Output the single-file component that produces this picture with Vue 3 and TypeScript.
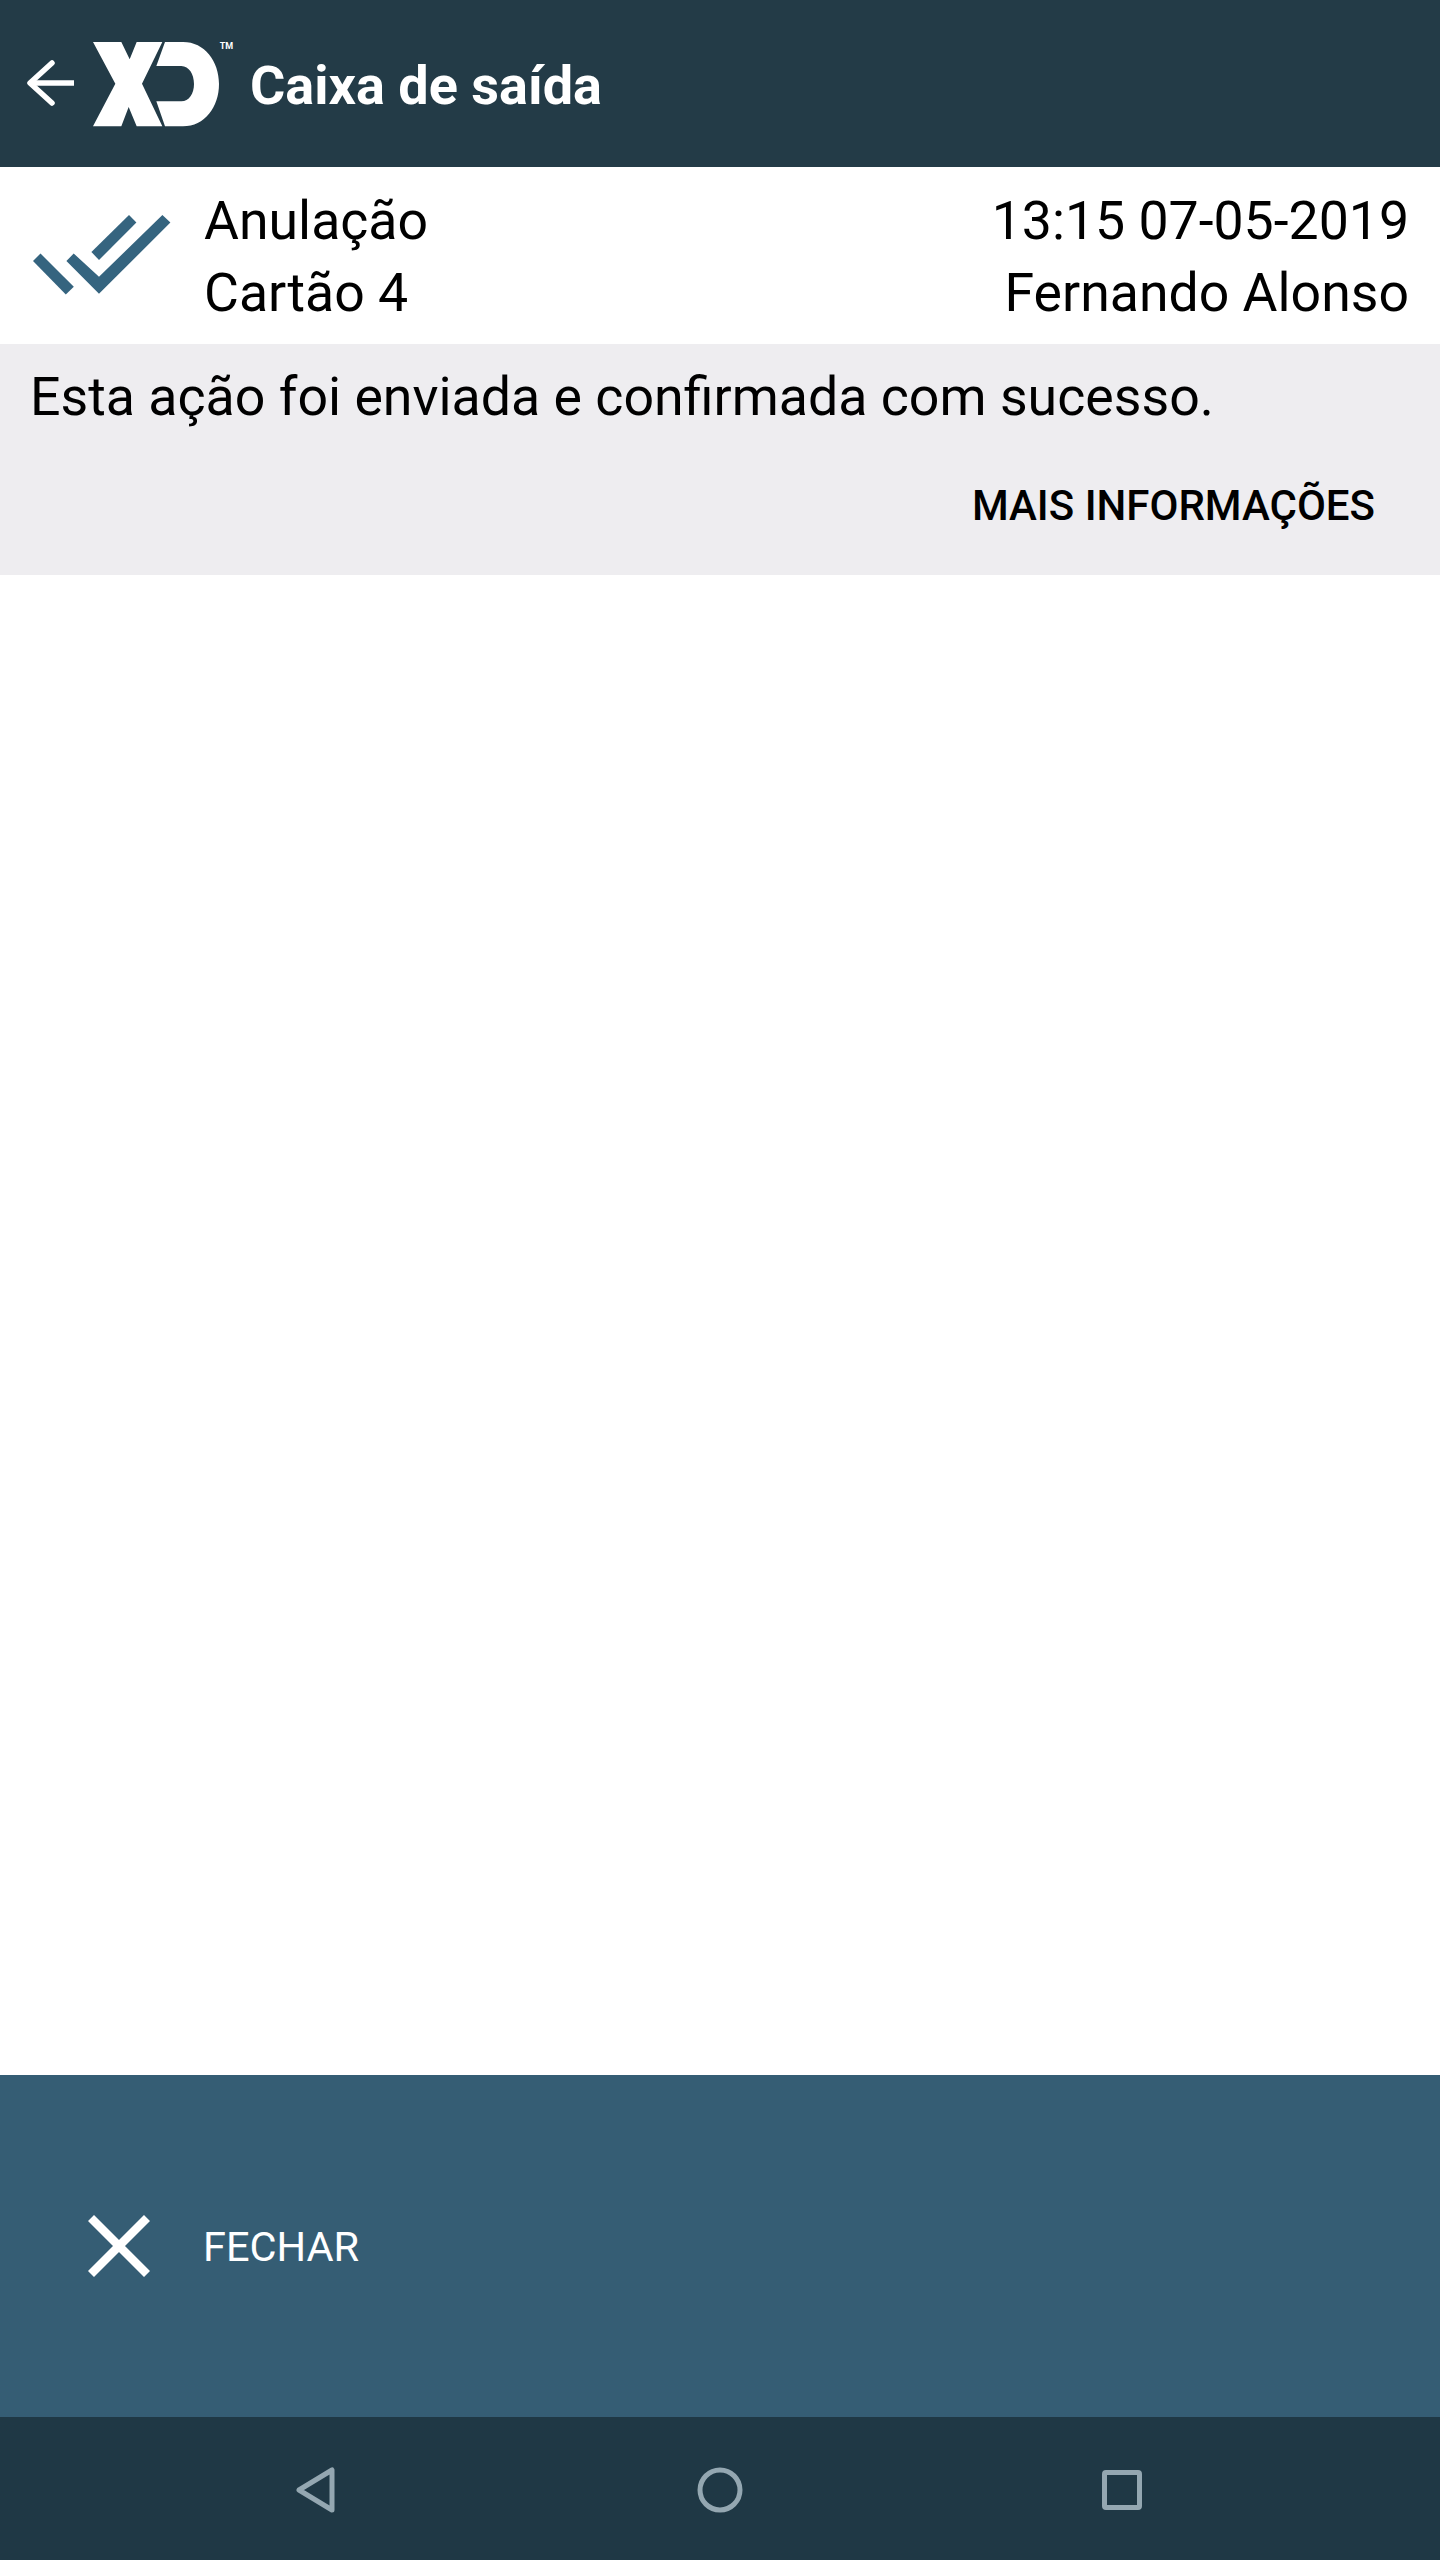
<script setup lang="ts">
const info = {
  action: 'Anulação',
  card: 'Cartão 4',
  time: '13:15 07-05-2019',
  user: 'Fernando Alonso',
  message: 'Esta ação foi enviada e confirmada com sucesso.',
}
</script>

<template>
  <div class="screen">
    <header class="topbar">
      <svg class="back" width="48" height="46" viewBox="0 0 48 46" fill="none" stroke="#fff" stroke-width="5.5" stroke-linecap="round" stroke-linejoin="round">
        <path d="M25 3 3 23 25 43" />
        <path d="M3 23H47" stroke-linecap="butt" />
      </svg>
      <svg class="logo" width="142" height="85" viewBox="0 0 426 255">
        <path fill="#fff" d="M0 0H85L110 52 131 0H208L147 125 208 253H131L107 195 85 253H0L67 125Z" />
        <path fill="#fff" d="M216 0H270C335 0 378 58 378 126 378 195 335 253 270 253H216L190 178H265C288 178 303 155 303 126 303 97 288 72 265 72H190Z" />
        <text x="380" y="20" class="tm">TM</text>
      </svg>
      <h1 class="title">Caixa de saída</h1>
    </header>

    <section class="row">
      <svg class="check" width="140" height="82" viewBox="0 0 140 82" fill="#35647f">
        <path d="M0 46 7.500 38.500 40.800 71.800 32.800 79.500Z" />
        <path d="M33.400 46 40.700 38.500 66 61.800 129.400 0 137.400 7.600 66 78.800Z" />
        <path d="M58.400 37 96 0 103.400 7.600 66 45Z" />
      </svg>
      <div class="col">
        <div>{{ info.action }}</div>
        <div>{{ info.card }}</div>
      </div>
      <div class="col right">
        <div>{{ info.time }}</div>
        <div>{{ info.user }}</div>
      </div>
    </section>

    <section class="detail">
      <p class="message">{{ info.message }}</p>
      <div class="more">MAIS INFORMAÇÕES</div>
    </section>

    <div class="spacer"></div>

    <footer class="actions">
      <svg class="close" width="62" height="62" viewBox="0 0 62 62" stroke="#fff" stroke-width="8.500">
        <path d="M3 3 59 59M59 3 3 59" />
      </svg>
      <span class="close-label">FECHAR</span>
    </footer>

    <nav class="navbar">
      <svg class="nav-back" width="40" height="46" viewBox="0 0 40 46" fill="none" stroke="#94a7b1" stroke-width="5" stroke-linejoin="round">
        <path d="M36 3V43L3 23Z" />
      </svg>
      <svg class="nav-home" width="46" height="46" viewBox="0 0 46 46" fill="none" stroke="#94a7b1" stroke-width="5">
        <circle cx="23" cy="23" r="20" />
      </svg>
      <svg class="nav-recent" width="40" height="40" viewBox="0 0 40 40" fill="none" stroke="#94a7b1" stroke-width="5" stroke-linejoin="round">
        <rect x="2.500" y="2.500" width="35" height="35" rx="1.500" />
      </svg>
    </nav>
  </div>
</template>

<style>
html,
body {
  margin: 0;
  background: #fff;
}
</style>

<style scoped>
.screen {
  width: 1440px;
  height: 2560px;
  display: flex;
  flex-direction: column;
  background: #fff;
  color: #000;
  font-family: Roboto, "Liberation Sans", sans-serif;
}

.topbar {
  height: 167px;
  flex: none;
  display: flex;
  align-items: center;
  background: #233b47;
  color: #fff;
}

.back {
  margin-left: 27px;
  margin-top: -2px;
}

.logo {
  margin-left: 18px;
  margin-top: 1px;
  overflow: visible;
}

.tm {
  fill: #fff;
  font-size: 27px;
  font-weight: 700;
}

.title {
  margin: 5px 0 0 15px;
  font-size: 54px;
  font-weight: 700;
  line-height: 60px;
}

.row {
  height: 177px;
  flex: none;
  display: flex;
  align-items: center;
  padding: 0 31px 0 33px;
  font-size: 53.600px;
  line-height: 72px;
}

.check {
  margin-right: 31px;
  margin-top: 1px;
}

.col {
  margin-top: 3px;
}

.right {
  margin-left: auto;
  text-align: right;
}

.detail {
  height: 231px;
  flex: none;
  box-sizing: border-box;
  padding: 23px 65px 0 30px;
  background: #eeedf0;
}

.message {
  margin: 0;
  font-size: 53.700px;
  line-height: 60px;
}

.more {
  margin-top: 54px;
  text-align: right;
  font-size: 42px;
  font-weight: 500;
  line-height: 50px;
}

.spacer {
  flex: 1;
}

.actions {
  height: 342px;
  flex: none;
  display: flex;
  align-items: center;
  padding-left: 88px;
  background: #355d74;
  color: #fff;
}

.close {
  margin-right: 53px;
}

.close-label {
  margin-top: 2px;
  font-size: 41.500px;
  line-height: 50px;
}

.navbar {
  height: 143px;
  flex: none;
  display: flex;
  align-items: center;
  background: #1f3845;
}

.nav-back {
  margin-left: 296px;
  margin-top: 2px;
}

.nav-home {
  margin-left: 361px;
  margin-top: 2px;
}

.nav-recent {
  margin-left: 359px;
  margin-top: 2px;
}
</style>
